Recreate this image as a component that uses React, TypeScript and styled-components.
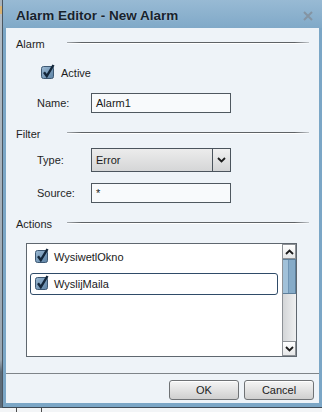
import React from "react";
import styled, { createGlobalStyle } from "styled-components";

const GlobalStyle = createGlobalStyle`
  html, body { margin: 0; padding: 0; background: #f2f4f6; }
  body { font-family: "Liberation Sans", Arial, sans-serif; font-size: 11px; color: #1d1d1d; }
  * { box-sizing: border-box; }
`;

const Page = styled.div`
  width: 322px;
  height: 412px;
  display: flex;
  flex-direction: column;
  overflow: hidden;
`;

const Top = styled.div`
  display: flex;
  height: 408px;
`;

const Strip = styled.div`
  width: 2px;
  flex: none;
  background: linear-gradient(
    to bottom,
    #a7b3bd 0px,
    #a7b3bd 6px,
    #d9b272 6px,
    #d9b272 14px,
    #b3bcc5 14px,
    #9aa6b1 360px,
    #5d6b78 372px,
    #5d6b78 408px
  );
`;

const Dialog = styled.div`
  flex: 1;
  display: flex;
  flex-direction: column;
  background: #7ba6c6;
  border-left: 1px solid #4b5661;
  border-bottom: 1px solid #3f4a55;
`;

const TitleBar = styled.div`
  height: 28px;
  flex: none;
  display: flex;
  align-items: center;
  justify-content: space-between;
  padding: 3px 9px 0 13px;
  background: linear-gradient(to bottom, #98bad4, #80a9c8);
`;

const Title = styled.div`
  font-size: 13.5px;
  font-weight: bold;
  color: #17232e;
  text-shadow: 0 0 2px rgba(255, 255, 255, 0.35);
  letter-spacing: 0;
`;

const Body = styled.div`
  flex: 1;
  margin: 0 3px 4px 3px;
  display: flex;
  flex-direction: column;
  background: #eef3f8;
`;

const Content = styled.div`
  height: 345px;
  flex: none;
  display: flex;
  flex-direction: column;
  padding-top: 8px;
`;

const SectionHeader = styled.div<{ $top: number }>`
  margin-top: ${(p) => p.$top}px;
  height: 16px;
  display: grid;
  grid-template-columns: 51px 1fr;
  align-items: center;
  padding: 0 10px;
`;

const SectionLabel = styled.span`
  color: #1f1f1f;
`;

const SectionLine = styled.div`
  height: 2px;
  margin-bottom: 3px;
  border-top: 1px solid #5e6266;
  border-bottom: 1px solid #ffffff;
  -webkit-mask-image: linear-gradient(to right, rgba(0,0,0,0.5), #000 6%, #000 94%, rgba(0,0,0,0.3));
  mask-image: linear-gradient(to right, rgba(0,0,0,0.5), #000 6%, #000 94%, rgba(0,0,0,0.3));
`;

const CheckRow = styled.label<{ $top: number }>`
  margin-top: ${(p) => p.$top}px;
  height: 16px;
  display: flex;
  align-items: center;
  gap: 6px;
  padding-left: 35px;
`;

const FormRow = styled.div<{ $top: number; $height: number }>`
  margin-top: ${(p) => p.$top}px;
  height: ${(p) => p.$height}px;
  display: grid;
  grid-template-columns: 54px 140px;
  align-items: center;
  padding-left: 31px;
`;

const FieldLabel = styled.span`
  color: #1f1f1f;
`;

const TextBox = styled.div`
  height: 20px;
  display: flex;
  align-items: center;
  padding-left: 4px;
  background: #f8fafc;
  border: 1px solid #4f5860;
  color: #1a1a1a;
`;

const Select = styled.div`
  height: 24px;
  display: grid;
  grid-template-columns: 1fr 18px;
  border: 1px solid #4b545d;
  background: linear-gradient(to bottom, #ececec, #d5d6d7);
`;

const SelectValue = styled.div`
  display: flex;
  align-items: center;
  padding-left: 4px;
  color: #1a1a1a;
`;

const SelectButton = styled.div`
  display: flex;
  align-items: center;
  justify-content: center;
  border-left: 1px solid #4b545d;
  background: linear-gradient(to bottom, #f1f1f1, #d3d4d5);
`;

const ListBox = styled.div`
  margin: 11px 0 0 20px;
  width: 271px;
  height: 114px;
  display: flex;
  border: 1px solid #5f676f;
  background: #ffffff;
`;

const Items = styled.div`
  flex: 1;
  display: flex;
  flex-direction: column;
  gap: 5px;
  padding: 2px 4px 0 3px;
`;

const Item = styled.div<{ $selected?: boolean }>`
  height: 22px;
  display: flex;
  align-items: center;
  gap: 5px;
  padding-left: 4px;
  border: 1px solid ${(p) => (p.$selected ? "#2f4b68" : "transparent")};
  border-radius: 3px;
  color: #1a1a1a;
`;

const ScrollBar = styled.div`
  width: 14px;
  display: flex;
  flex-direction: column;
  border-left: 1px solid #8d9196;
  background: linear-gradient(to right, #d4d6d8, #eff0f1);
`;

const ScrollButton = styled.div`
  height: 15px;
  flex: none;
  display: flex;
  align-items: center;
  justify-content: center;
  border: 1px solid #8d9196;
  border-left: none;
  background: linear-gradient(to bottom, #ffffff, #e6e7e8);
`;

const Thumb = styled.div`
  height: 35px;
  flex: none;
  border: 1px solid #5d7f9b;
  border-left: none;
  background: linear-gradient(to right, #a1c1d9 0, #a1c1d9 45%, #6f95b5 45%, #6f95b5 52%, #86abc8 52%, #86abc8 100%);
`;

const Track = styled.div`
  flex: 1;
`;

const Footer = styled.div`
  flex: 1;
  display: flex;
  justify-content: flex-end;
  align-items: flex-start;
  gap: 5px;
  padding: 6px 5px 0 0;
  border-top: 1px solid #7e8489;
`;

const Button = styled.button`
  width: 70px;
  height: 20px;
  padding: 0;
  font-family: "Liberation Sans", Arial, sans-serif;
  font-size: 11px;
  color: #222;
  border: 1px solid #6f7275;
  border-radius: 3px;
  background: linear-gradient(to bottom, #f5f5f5, #e2e2e2 50%, #cfcfcf);
  box-shadow: inset 0 1px 0 #ffffff;
`;

const Bottom = styled.div`
  flex: 1;
  display: flex;
  padding-left: 16px;
  gap: 24px;
  background: #f3f5f7;
`;

const Tick = styled.div`
  width: 1px;
  background: #4d4d4d;
`;

const CheckIcon = () => (
  <svg width="14" height="15" viewBox="0 0 14 15" style={{ flex: "none", marginTop: -3 }}>
    <defs>
      <linearGradient id="cbfill" x1="0" y1="0" x2="1" y2="1">
        <stop offset="0" stopColor="#9cb9d2" />
        <stop offset="1" stopColor="#5c82a5" />
      </linearGradient>
    </defs>
    <rect x="0.5" y="2.5" width="12" height="12" rx="2" fill="url(#cbfill)" stroke="#3d5873" />
    <path d="M3 8.2 L5.8 12 L12.5 1" fill="none" stroke="#13263a" strokeWidth="2.4" strokeLinejoin="miter" />
  </svg>
);

const Chevron = ({ up }: { up?: boolean }) => (
  <svg width="9" height="6" viewBox="0 0 9 6">
    <path
      d={up ? "M1 5 L4.5 1.5 L8 5" : "M1 1 L4.5 4.5 L8 1"}
      fill="none"
      stroke="#1c1c1c"
      strokeWidth="1.8"
    />
  </svg>
);

const CloseIcon = () => (
  <svg width="10" height="10" viewBox="0 0 10 10">
    <path d="M1 1 L9 9 M9 1 L1 9" stroke="#8494a3" strokeWidth="2" />
  </svg>
);

export default function App() {
  return (
    <>
      <GlobalStyle />
      <Page>
        <Top>
          <Strip />
          <Dialog>
            <TitleBar>
              <Title>Alarm Editor - New Alarm</Title>
              <CloseIcon />
            </TitleBar>
            <Body>
              <Content>
                <SectionHeader $top={0}>
                  <SectionLabel>Alarm</SectionLabel>
                  <SectionLine />
                </SectionHeader>
                <CheckRow $top={13}>
                  <CheckIcon />
                  <span>Active</span>
                </CheckRow>
                <FormRow $top={12} $height={20}>
                  <FieldLabel>Name:</FieldLabel>
                  <TextBox>Alarm1</TextBox>
                </FormRow>
                <SectionHeader $top={13}>
                  <SectionLabel>Filter</SectionLabel>
                  <SectionLine />
                </SectionHeader>
                <FormRow $top={6} $height={24}>
                  <FieldLabel>Type:</FieldLabel>
                  <Select>
                    <SelectValue>Error</SelectValue>
                    <SelectButton>
                      <Chevron />
                    </SelectButton>
                  </Select>
                </FormRow>
                <FormRow $top={11} $height={20}>
                  <FieldLabel>Source:</FieldLabel>
                  <TextBox>*</TextBox>
                </FormRow>
                <SectionHeader $top={13}>
                  <SectionLabel>Actions</SectionLabel>
                  <SectionLine />
                </SectionHeader>
                <ListBox>
                  <Items>
                    <Item>
                      <CheckIcon />
                      <span>WysiwetlOkno</span>
                    </Item>
                    <Item $selected>
                      <CheckIcon />
                      <span>WyslijMaila</span>
                    </Item>
                  </Items>
                  <ScrollBar>
                    <ScrollButton>
                      <Chevron up />
                    </ScrollButton>
                    <Thumb />
                    <Track />
                    <ScrollButton>
                      <Chevron />
                    </ScrollButton>
                  </ScrollBar>
                </ListBox>
              </Content>
              <Footer>
                <Button>OK</Button>
                <Button>Cancel</Button>
              </Footer>
            </Body>
          </Dialog>
        </Top>
        <Bottom>
          <Tick />
          <Tick />
        </Bottom>
      </Page>
    </>
  );
}
